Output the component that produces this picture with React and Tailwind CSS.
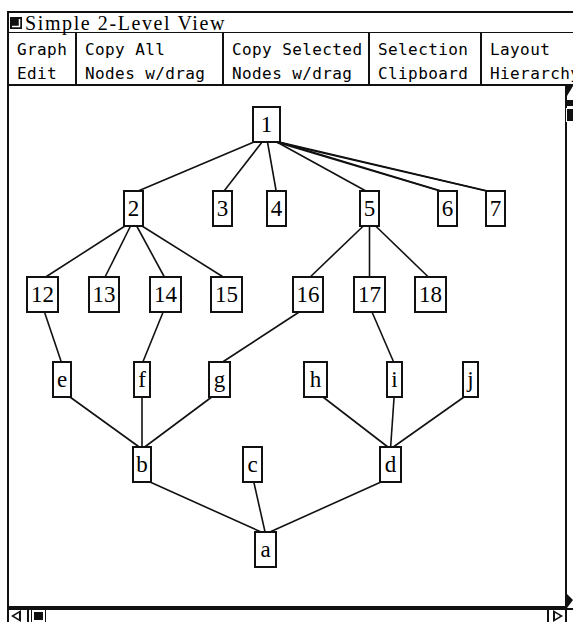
import React from "react";

const ROWS = [106, 190, 276, 361, 446, 531];
const NODES = {
  "1": [252, 0, 29],
  "2": [123, 1, 21],
  "3": [212, 1, 21],
  "4": [266, 1, 21],
  "5": [359, 1, 21],
  "6": [437, 1, 21],
  "7": [485, 1, 21],
  "12": [26, 2, 33],
  "13": [88, 2, 32],
  "14": [149, 2, 33],
  "15": [210, 2, 33],
  "16": [292, 2, 32],
  "17": [353, 2, 33],
  "18": [414, 2, 33],
  e: [52, 3, 20],
  f: [133, 3, 18],
  g: [208, 3, 23],
  h: [303, 3, 25],
  i: [386, 3, 17],
  j: [462, 3, 17],
  b: [132, 4, 20],
  c: [242, 4, 21],
  d: [379, 4, 23],
  a: [254, 5, 23],
};
const H = 37;
const OX = 9;
const OY = 86;

const EDGES = [
  ["1", "2"], ["1", "3"], ["1", "4"], ["1", "5"], ["1", "6"], ["1", "7"],
  ["2", "12"], ["2", "13"], ["2", "14"], ["2", "15"],
  ["5", "16"], ["5", "17"], ["5", "18"],
  ["12", "e"], ["14", "f"], ["16", "g"], ["17", "i"],
  ["e", "b"], ["f", "b"], ["g", "b"],
  ["h", "d"], ["i", "d"], ["j", "d"],
  ["b", "a"], ["c", "a"], ["d", "a"],
];

function box(id) {
  const [x, r, w] = NODES[id];
  return { x: x - OX, y: ROWS[r] - OY, w, h: H };
}

function edgeLines(p, c, extra) {
  const P = box(p);
  const C = box(c);
  const pcx = P.x + P.w / 2;
  const ccx = C.x + C.w / 2;
  const dx = ccx - pcx;
  let sx = pcx + dx * 0.1;
  sx = Math.max(P.x + 2, Math.min(P.x + P.w - 2, sx));
  let ex = ccx - dx * 0.035;
  ex = Math.max(C.x + 2, Math.min(C.x + C.w - 2, ex));
  const lines = [[sx, P.y + P.h - 1, ex, C.y + 1]];
  if (extra) lines.push([sx - 3, P.y + P.h - 1, ex - 1, C.y + 1]);
  return lines;
}

function Node({ id }) {
  const b = box(id);
  return (
    <div
      className="absolute bg-white border-2 border-[#111] flex items-center justify-center text-[23px] leading-none text-black"
      style={{ left: b.x, top: b.y, width: b.w, height: b.h, fontFamily: '"Liberation Serif", serif' }}
    >
      <span className="-mt-[1px]">{id}</span>
    </div>
  );
}

function Cell({ l1, l2, w, last }) {
  return (
    <div
      className={`flex flex-col pl-[8px] pt-[5px] leading-[24px] text-[16px] tracking-[0.4px] whitespace-nowrap overflow-hidden ${last ? "" : "border-r-2 border-[#111]"}`}
      style={{ width: w, fontFamily: '"DejaVu Sans Mono", monospace' }}
    >
      <span>{l1}</span>
      <span>{l2}</span>
    </div>
  );
}

export default function App() {
  const lines = [];
  EDGES.forEach(([p, c]) => {
    edgeLines(p, c, p === "1" && (c === "6" || c === "7")).forEach((l) => lines.push(l));
  });
  return (
    <div className="w-[573px] h-[622px] bg-white overflow-hidden text-black">
      <div className="h-[11px]" />
      <div className="ml-[7px] w-[566px] h-[611px] border-l-2 border-t-2 border-[#111] flex flex-col">
        {/* title bar */}
        <div className="h-[20px] border-b border-[#111] flex items-center pl-[1px] shrink-0">
          <svg width="12" height="12" viewBox="0 0 12 12" className="mr-[3px]">
            <rect x="0" y="0" width="12" height="12" fill="#111" />
            <polyline points="2,9.5 9.5,9.5 9.5,2" fill="none" stroke="#fff" strokeWidth="1.5" />
          </svg>
          <span
            className="text-[20px] leading-none tracking-[1.6px]"
            style={{ fontFamily: '"Liberation Serif", serif' }}
          >
            Simple 2-Level View
          </span>
        </div>
        {/* button row */}
        <div className="h-[53px] border-b-2 border-[#111] flex shrink-0">
          <Cell l1="Graph" l2="Edit" w={68} />
          <Cell l1="Copy All" l2="Nodes w/drag" w={147} />
          <Cell l1="Copy Selected" l2="Nodes w/drag" w={146} />
          <Cell l1="Selection" l2="Clipboard" w={112} />
          <Cell l1="Layout" l2="Hierarchy" w={91} last />
        </div>
        {/* canvas + vertical scroll */}
        <div className="flex-1 flex min-h-0">
          <div className="w-[556px] relative border-b-2 border-[#111]">
            <svg className="absolute inset-0" width="556" height="520">
              {lines.map((l, i) => (
                <line key={i} x1={l[0]} y1={l[1]} x2={l[2]} y2={l[3]} stroke="#111" strokeWidth="1.6" />
              ))}
            </svg>
            {Object.keys(NODES).map((id) => (
              <Node key={id} id={id} />
            ))}
          </div>
          <div className="w-[8px] border-l-2 border-[#111] flex flex-col justify-between">
            <div className="flex flex-col">
              <svg width="6" height="14" viewBox="0 0 6 14">
                <polygon points="0,0 6,0 0,10" fill="#111" />
              </svg>
              <div className="h-[6px] bg-[#111]" />
              <div className="mt-[3px] h-[12px] border-2 border-[#111] bg-[#111] outline outline-1 outline-white" />
            </div>
            <svg width="6" height="16" viewBox="0 0 6 16">
              <polygon points="0,2 6,8 0,16" fill="#111" />
            </svg>
          </div>
        </div>
        {/* horizontal scroll */}
        <div className="h-[14px] border-t-2 border-[#111] flex items-start shrink-0">
          <svg width="16" height="12" viewBox="0 0 16 12">
            <polygon points="2,6 12,0 12,12" fill="#111" />
            <polygon points="5,6 10,3 10,9" fill="#fff" />
          </svg>
          <div className="w-[2px] h-[12px] bg-[#111] ml-[2px]" />
          <div className="ml-[3px] w-[13px] h-[12px] border-2 border-white bg-[#111] outline outline-1 outline-[#111]" />
          <div className="flex-1" />
          <div className="w-[2px] h-[12px] bg-[#111]" />
          <svg width="16" height="12" viewBox="0 0 16 12">
            <polygon points="14,6 4,0 4,12" fill="#111" />
            <polygon points="11,6 6,3 6,9" fill="#fff" />
          </svg>
          <div className="w-[2px] h-[12px] bg-[#111]" />
          <div className="w-[6px]" />
        </div>
      </div>
    </div>
  );
}
